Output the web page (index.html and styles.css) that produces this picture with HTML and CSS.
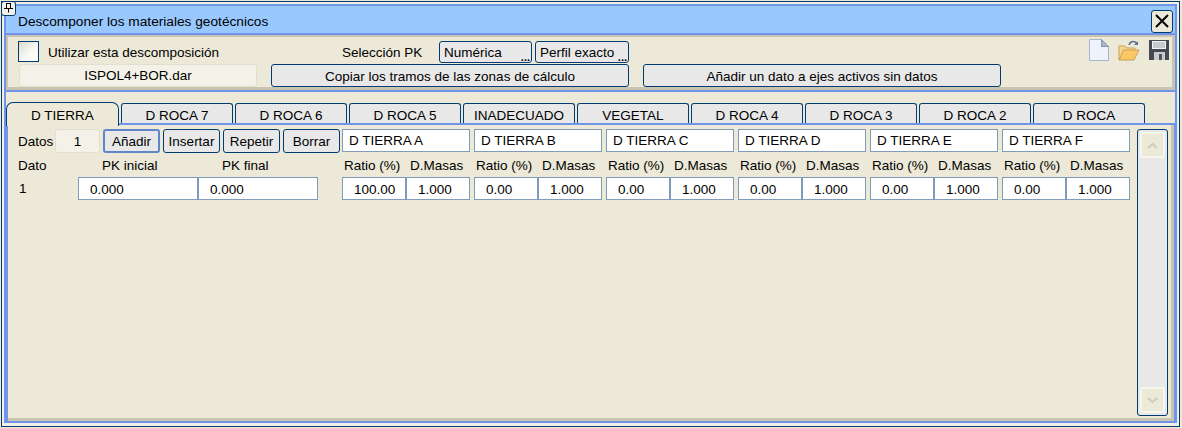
FILE: index.html
```html
<!DOCTYPE html>
<html lang="es">
<head>
  <meta charset="UTF-8" />
  <title>Descomponer los materiales geotécnicos</title>
  <link rel="stylesheet" href="styles.css">
</head>
<body>
  <div class="pin">
    <svg width="11" height="11" viewBox="0 0 11 11"><path d="M3 1.500h5M3.500 1.500v5M7.500 1.500v5M1 6.500h9M5.500 6.500v4" fill="none" stroke="#000"/></svg>
  </div>
  <div class="frame">
    <div class="inner">
      <div class="titlebar">
        <span class="title">Descomponer los materiales geotécnicos</span>
        <button class="close">
          <svg width="16" height="16" viewBox="0 0 16 16"><path d="M2 2l12 12M14 2L2 14" stroke="#000" stroke-width="2" fill="none"/></svg>
        </button>
      </div>

      <div class="header">
        <div class="header-row">
          <span class="check"></span>
          <span class="use-label">Utilizar esta descomposición</span>
          <span class="pk-label">Selección PK</span>
          <button class="btn btn-dots btn-num">Numérica</button>
          <button class="btn btn-dots btn-perfil">Perfil exacto</button>
          <div class="tools">
            <svg width="20" height="22" viewBox="0 0 20 22"><path d="M.500.500h12l7 7v14H.500z" fill="#eef2fa" stroke="#a8b6cc"/><path d="M12.500.500v7h7z" fill="#a9b8cf" stroke="#8296b4"/></svg>
            <svg width="22" height="22" viewBox="0 0 22 22"><path d="M1 21V7h6l2 2h8v3H6L1 21z" fill="#f6d68c" stroke="#c9a058"/><path d="M1 21l4.500-10H21l-5 10z" fill="#fbc866" stroke="#c9a058"/><path d="M11 6c1-4 6-5 8-1" fill="none" stroke="#5c7290" stroke-width="1.500"/><path d="M20 2v4h-4z" fill="#5c7290"/></svg>
            <svg width="20" height="20" viewBox="0 0 20 20"><path d="M0 0h20v20H0z" fill="#444a50"/><path d="M3 1h14v8H3z" fill="#f4f4f4"/><path d="M4 3h12M4 5h12M4 7h12" stroke="#9aa0a6"/><path d="M5 12h11v8H5z" fill="#c8ccd0"/><path d="M10 14h3v6h-3z" fill="#50565c"/></svg>
          </div>
        </div>
        <div class="header-row header-row-2">
          <div class="field file-field">ISPOL4+BOR.dar</div>
          <button class="btn btn-copy">Copiar los tramos de las zonas de cálculo</button>
          <button class="btn btn-copy btn-add">Añadir un dato a ejes activos sin datos</button>
        </div>
      </div>

      <div class="tabs">
        <div class="tab active">D TIERRA</div>
        <div class="tab">D ROCA 7</div>
        <div class="tab">D ROCA 6</div>
        <div class="tab">D ROCA 5</div>
        <div class="tab">INADECUADO</div>
        <div class="tab">VEGETAL</div>
        <div class="tab">D ROCA 4</div>
        <div class="tab">D ROCA 3</div>
        <div class="tab">D ROCA 2</div>
        <div class="tab">D ROCA</div>
      </div>

      <div class="page">
        <div class="sheet">
          <div class="row row-top">
            <div class="lead">
              <span class="datos-label">Datos</span>
              <div class="field count">1</div>
              <button class="btn act default">Añadir</button>
              <button class="btn act">Insertar</button>
              <button class="btn act">Repetir</button>
              <button class="btn act">Borrar</button>
            </div>
            <div class="cols">
              <div class="cell name">D TIERRA A</div>
              <div class="cell name">D TIERRA B</div>
              <div class="cell name">D TIERRA C</div>
              <div class="cell name">D TIERRA D</div>
              <div class="cell name">D TIERRA E</div>
              <div class="cell name">D TIERRA F</div>
            </div>
          </div>

          <div class="row row-heads">
            <div class="lead">
              <span class="col-dato">Dato</span>
              <span class="col-pk">PK inicial</span>
              <span class="col-pk">PK final</span>
            </div>
            <div class="cols">
              <div class="pair"><span>Ratio (%)</span><span>D.Masas</span></div>
              <div class="pair"><span>Ratio (%)</span><span>D.Masas</span></div>
              <div class="pair"><span>Ratio (%)</span><span>D.Masas</span></div>
              <div class="pair"><span>Ratio (%)</span><span>D.Masas</span></div>
              <div class="pair"><span>Ratio (%)</span><span>D.Masas</span></div>
              <div class="pair"><span>Ratio (%)</span><span>D.Masas</span></div>
            </div>
          </div>

          <div class="row row-data">
            <div class="lead">
              <span class="col-dato">1</span>
              <div class="cell pk">0.000</div>
              <div class="cell pk">0.000</div>
            </div>
            <div class="cols">
              <div class="pair"><div class="cell">100.00</div><div class="cell">1.000</div></div>
              <div class="pair"><div class="cell">0.00</div><div class="cell">1.000</div></div>
              <div class="pair"><div class="cell">0.00</div><div class="cell">1.000</div></div>
              <div class="pair"><div class="cell">0.00</div><div class="cell">1.000</div></div>
              <div class="pair"><div class="cell">0.00</div><div class="cell">1.000</div></div>
              <div class="pair"><div class="cell">0.00</div><div class="cell">1.000</div></div>
            </div>
          </div>
        </div>

        <div class="scrollbar">
          <div class="arrow"><svg width="11" height="7" viewBox="0 0 11 7"><path d="M1 6l4.500-4 4.500 4" fill="none" stroke="#d0cdbd" stroke-width="2.200"/></svg></div>
          <div class="arrow"><svg width="11" height="7" viewBox="0 0 11 7"><path d="M1 1l4.500 4 4.500-4" fill="none" stroke="#d0cdbd" stroke-width="2.200"/></svg></div>
        </div>
      </div>
    </div>
  </div>
</body>
</html>
```

FILE: styles.css
```css
* {
  box-sizing: border-box;
}
body {
  margin: 0;
  width: 1182px;
  height: 428px;
  overflow: hidden;
  background: #ece9d8;
  font-family: "Liberation Sans", Arial, sans-serif;
  font-size: 13.5px;
  color: #000;
}
button {
  font: inherit;
  color: inherit;
  padding: 0;
}
.pin {
  position: absolute;
  left: 1px;
  top: 1px;
  width: 15px;
  height: 15px;
  background: #f4f2e8;
  border: 1px solid #003c74;
  border-radius: 3px;
  display: flex;
  justify-content: center;
}
.frame {
  margin: 1px 2px 1px 1px;
  height: 426px;
  border: 1px solid #003c74;
  padding: 2px 2px 3px;
  background: #f2f0e6;
}
.inner {
  height: 100%;
  border: 2px solid #6f94ea;
  background: #ece9d8;
  display: flex;
  flex-direction: column;
}
.titlebar {
  height: 27px;
  flex: none;
  background: #99c8ff;
  padding-left: 12px;
  padding-right: 2px;
  display: flex;
  align-items: center;
  justify-content: space-between;
}
.title {
  font-size: 13.7px;
  padding-top: 3px;
}
.close {
  width: 22px;
  height: 23px;
  margin-top: 3px;
  background: #ece9d8;
  border: 1px solid #003c74;
  border-radius: 3px;
  display: flex;
  align-items: center;
  justify-content: center;
}
.header {
  height: 59px;
  flex: none;
  margin-bottom: 10px;
  border-top: 2px solid #6f94ea;
  border-bottom: 2px solid #6f94ea;
  box-shadow: inset 0 2px 0 #c8c4b0, inset 0 -3px 0 #c8c4b0, inset 2px 0 0 #c8c4b0, inset -3px 0 0 #c8c4b0;
  padding: 6px 0 0 12px;
}
.header-row {
  display: flex;
  align-items: center;
  height: 22px;
}
.header-row-2 {
  margin-top: 1px;
  height: 23px;
}
.check {
  width: 21px;
  height: 21px;
  margin-bottom: 2px;
  border: 1px solid #003c74;
  background: linear-gradient(135deg, #dcd9cb, #f8f8f4 55%, #fff);
}
.use-label {
  margin-left: 9px;
  width: 294px;
  padding-top: 1px;
}
.pk-label {
  width: 97px;
  padding-top: 1px;
}
.btn {
  height: 22px;
  background: #e8e8e8;
  border: 1px solid #003c74;
  border-radius: 3px;
  position: relative;
  padding-top: 1px;
}
.btn-dots {
  text-align: left;
  padding-left: 4px;
}
.btn-dots::after {
  content: "...";
  position: absolute;
  right: 1px;
  bottom: 1px;
  font-weight: bold;
  font-size: 11px;
  line-height: 7px;
}
.btn-num {
  width: 93px;
}
.btn-perfil {
  width: 94px;
  margin-left: 3px;
}
.tools {
  margin-left: auto;
  margin-right: 6px;
  margin-bottom: 4px;
  display: flex;
  align-items: center;
  gap: 9px;
}
.field {
  background: #f4f2e8;
  border: 1px solid #e2dfcf;
  border-radius: 3px;
  display: flex;
  align-items: center;
  justify-content: center;
}
.file-field {
  width: 238px;
  height: 23px;
  margin-left: 1px;
}
.btn-copy {
  width: 358px;
  height: 23px;
  margin-left: 14px;
}
.tabs {
  height: 21px;
  flex: none;
  display: flex;
  align-items: flex-end;
  gap: 2px;
  position: relative;
  z-index: 1;
}
.tab {
  width: 112px;
  height: 20px;
  background: #e8e8e8;
  border: 1px solid #003c74;
  border-bottom: 0;
  border-radius: 3px 3px 0 0;
  text-align: center;
  line-height: 23px;
}
.tab.active {
  width: 113px;
  height: 24px;
  margin-bottom: -3px;
  background: #ece9d8;
  border-radius: 7px 7px 0 0;
  line-height: 26px;
}
.page {
  flex: 1;
  display: flex;
  border-top: 2px solid #6f94ea;
  border-left: 2px solid #6f94ea;
  border-right: 1px solid #6f94ea;
  box-shadow: inset 0 -3px 0 #c8c4b0, inset -3px 0 0 #c8c4b0;
  padding: 4px 0 4px 10px;
}
.sheet {
  width: 1119px;
  flex: none;
}
.row {
  display: flex;
}
.lead {
  width: 324px;
  flex: none;
  display: flex;
  align-items: center;
}
.cols {
  display: flex;
  gap: 4px;
}
.datos-label {
  width: 37px;
}
.count {
  width: 45px;
  height: 24px;
}
.act {
  width: 57px;
  height: 24px;
  margin-left: 3px;
}
.default {
  border-width: 2px;
  border-color: #5f86c8;
}
.row-top {
  height: 24px;
  align-items: flex-start;
}
.cell {
  background: #fff;
  border: 1px solid #7f9db9;
  height: 23px;
  width: 64px;
  padding-left: 11px;
  line-height: 23px;
}
.cell.name {
  width: 128px;
  padding-left: 6px;
  line-height: 22px;
}
.cell.pk {
  width: 120px;
  padding-left: 11px;
}
.row-heads {
  margin-top: 5px;
  height: 15px;
  line-height: 15px;
}
.col-dato {
  width: 60px;
  flex: none;
  padding-left: 1px;
}
.row-heads .col-dato {
  width: 84px;
  padding-left: 0;
}
.col-pk {
  width: 120px;
}
.pair {
  width: 128px;
  display: flex;
}
.row-heads .pair span {
  width: 64px;
  white-space: nowrap;
  padding-left: 2px;
}
.row-heads .pair span + span {
  padding-left: 4px;
}
.row-data {
  margin-top: 4px;
}
.scrollbar {
  width: 31px;
  margin-bottom: 1px;
  background: #e8e8e8;
  border: 1px solid #003c74;
  border-radius: 3px;
  display: flex;
  flex-direction: column;
  justify-content: space-between;
  padding: 2px;
}
.arrow {
  height: 26px;
  background: #ece9d8;
  border: 2px solid #f6f5ee;
  border-radius: 2px;
  display: flex;
  align-items: center;
  justify-content: center;
}
```
